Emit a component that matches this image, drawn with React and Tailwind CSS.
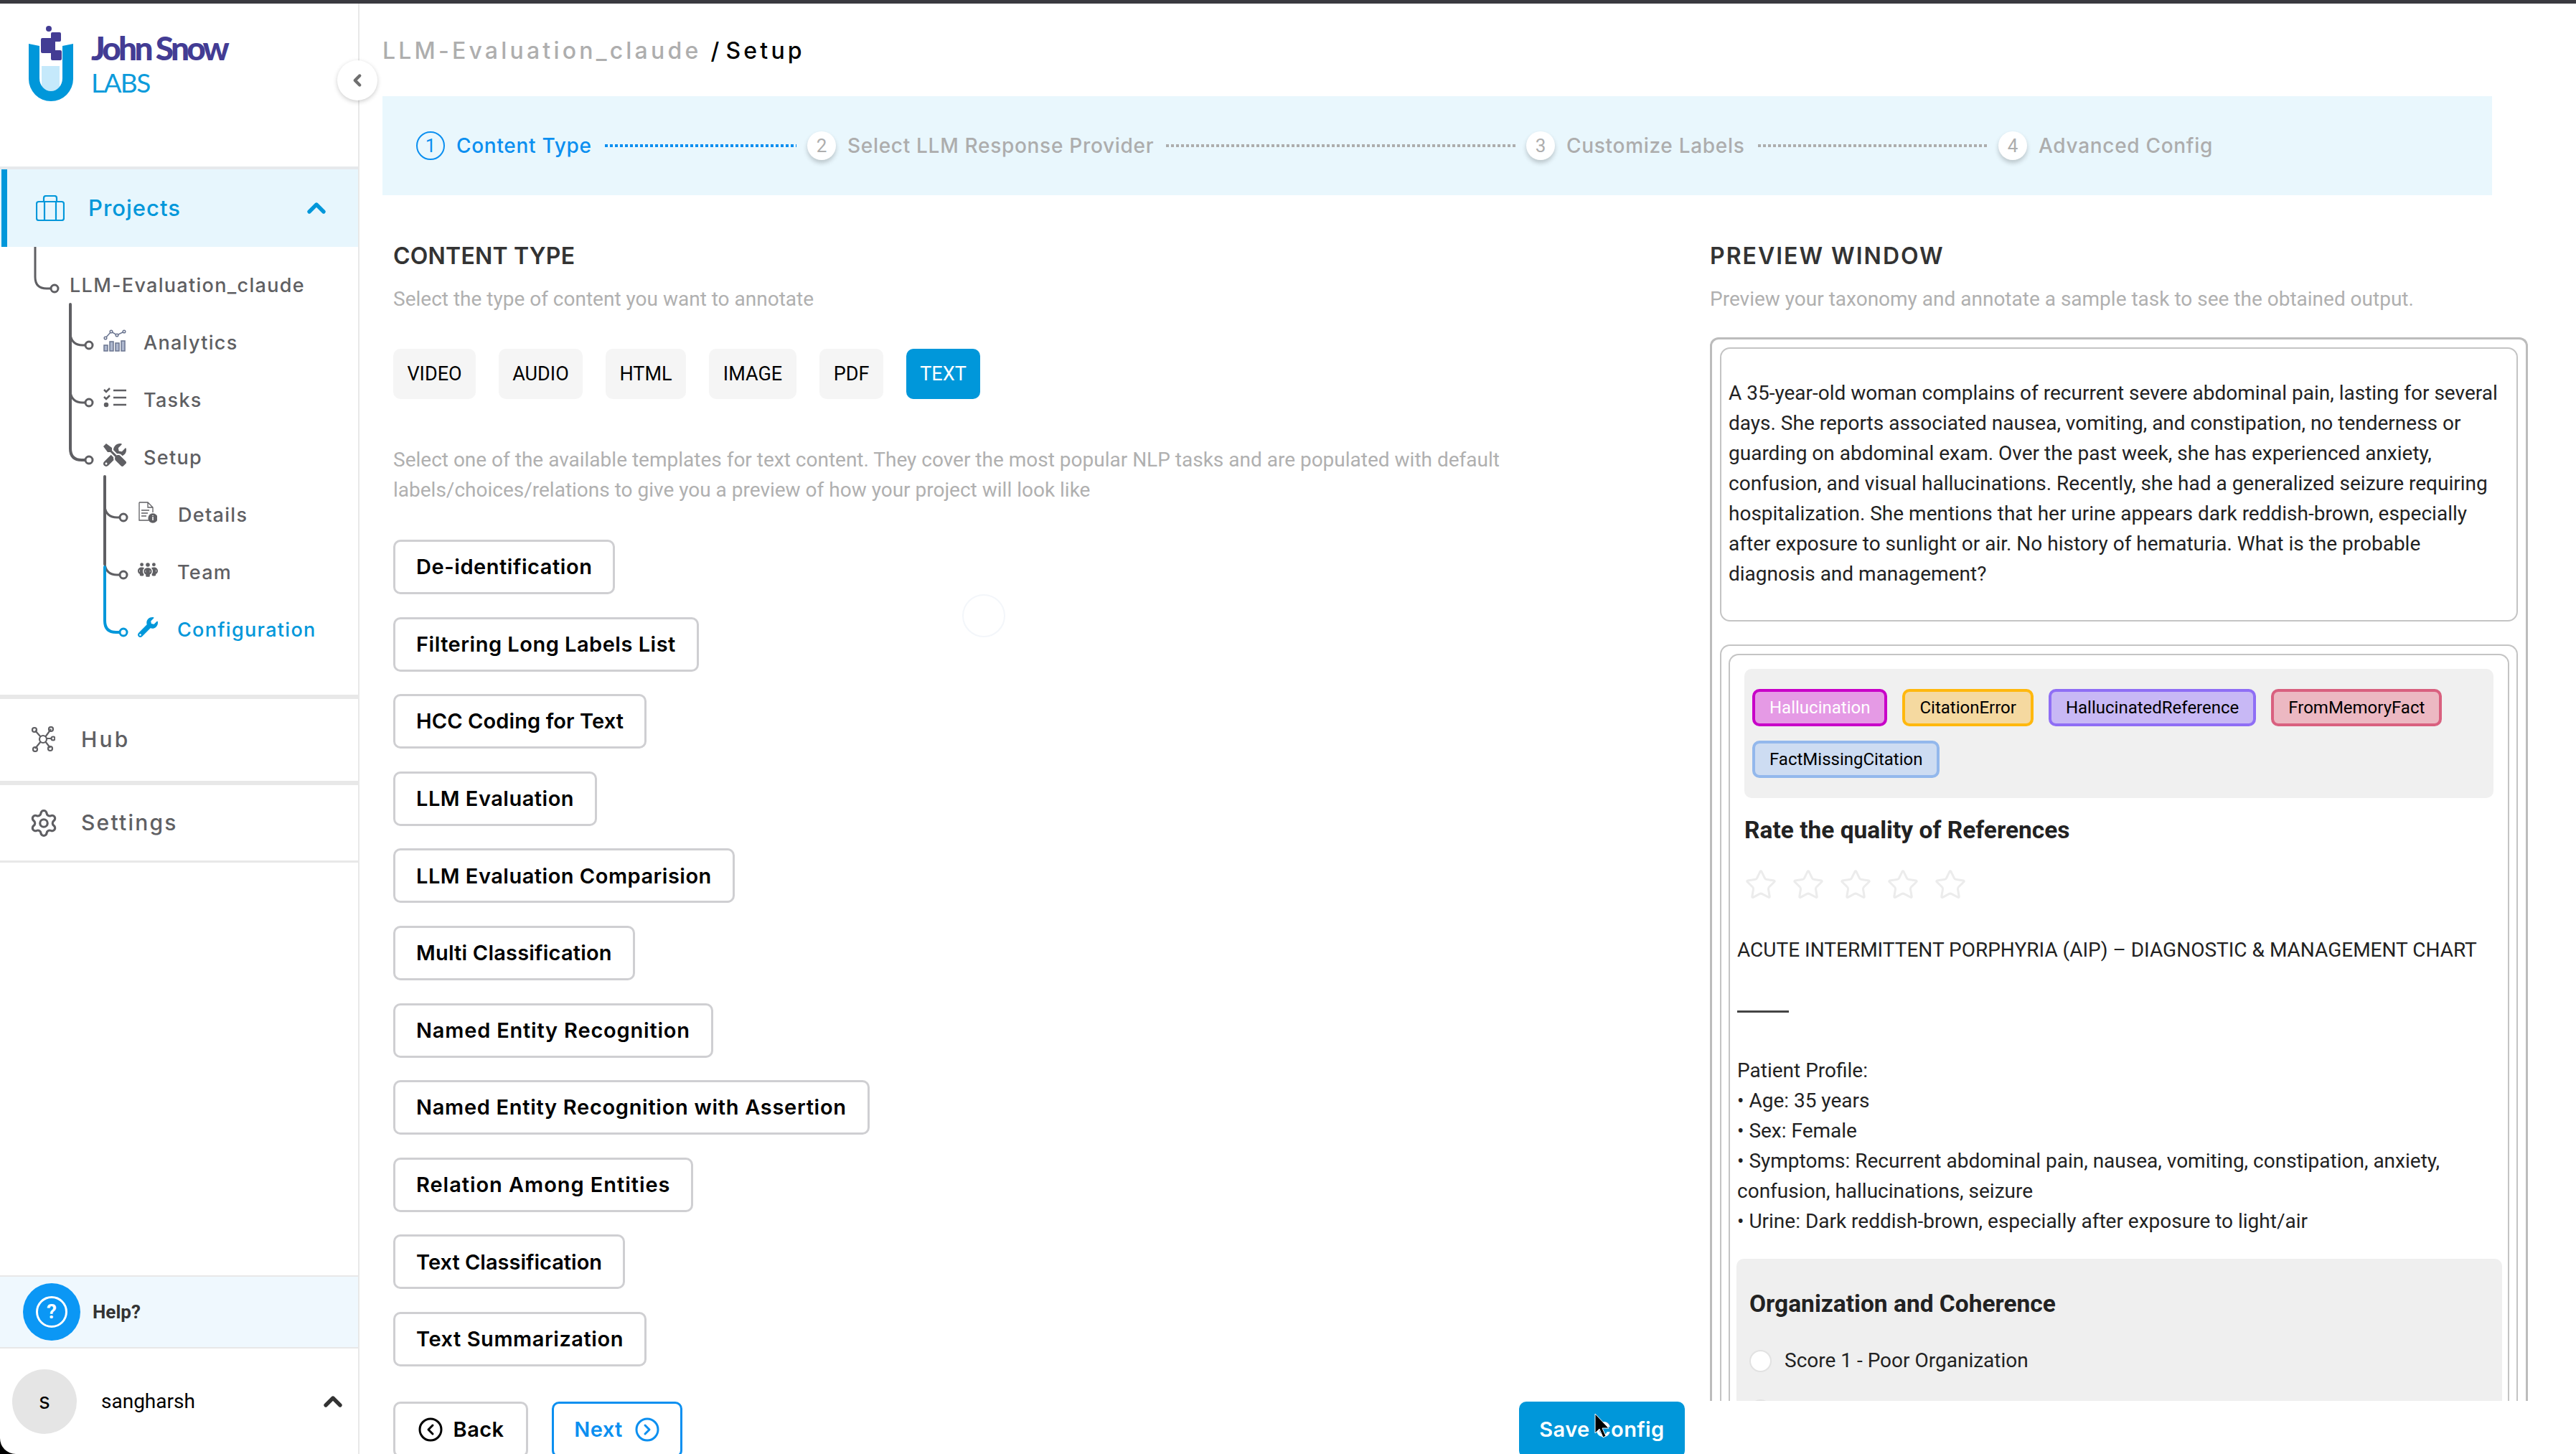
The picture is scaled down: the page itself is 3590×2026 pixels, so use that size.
import { ChevronLeft, ChevronUp, CircleChevronLeft, CircleChevronRight, Settings, Star } from 'lucide-react';
import { FaTools, FaWrench } from 'react-icons/fa';
import { FaPeopleGroup } from 'react-icons/fa6';

const tabs = [
  { label: 'VIDEO', width: 'w-[115px]' },
  { label: 'AUDIO', width: 'w-[117px]' },
  { label: 'HTML', width: 'w-[112px]' },
  { label: 'IMAGE', width: 'w-[122px]' },
  { label: 'PDF', width: 'w-[89px]' },
];

const templates = [
  { name: 'De-identification', track: 'tracking-[0.55px]' },
  { name: 'Filtering Long Labels List', track: 'tracking-[0.5px]' },
  { name: 'HCC Coding for Text', track: 'tracking-[0.1px]' },
  { name: 'LLM Evaluation', track: 'tracking-[0.5px]' },
  { name: 'LLM Evaluation Comparision', track: 'tracking-[0.5px]' },
  { name: 'Multi Classification', track: 'tracking-[0.2px]' },
  { name: 'Named Entity Recognition', track: 'tracking-[0.8px]' },
  { name: 'Named Entity Recognition with Assertion', track: 'tracking-[0.7px]' },
  { name: 'Relation Among Entities', track: 'tracking-[0.95px]' },
  { name: 'Text Classification', track: 'tracking-[0px]' },
  { name: 'Text Summarization', track: 'tracking-[0.55px]' },
];

const question = [
  'A 35-year-old woman complains of recurrent severe abdominal pain, lasting for several',
  'days. She reports associated nausea, vomiting, and constipation, no tenderness or',
  'guarding on abdominal exam. Over the past week, she has experienced anxiety,',
  'confusion, and visual hallucinations. Recently, she had a generalized seizure requiring',
  'hospitalization. She mentions that her urine appears dark reddish-brown, especially',
  'after exposure to sunlight or air. No history of hematuria. What is the probable',
  'diagnosis and management?',
];

const profile = [
  'Patient Profile:',
  '• Age: 35 years',
  '• Sex: Female',
  '• Symptoms: Recurrent abdominal pain, nausea, vomiting, constipation, anxiety,',
  'confusion, hallucinations, seizure',
  '• Urine: Dark reddish-brown, especially after exposure to light/air',
];

const chips = [
  { label: 'Hallucination', style: 'border-[#c800c8] bg-[#e59ae5] text-white' },
  { label: 'CitationError', style: 'border-[#ffb80e] bg-[#f5d9a0] text-black' },
  { label: 'HallucinatedReference', style: 'border-[#8f6ef5] bg-[#c8b8f5] text-black' },
  { label: 'FromMemoryFact', style: 'border-[#d9607f] bg-[#ecb8c2] text-black' },
  { label: 'FactMissingCitation', style: 'border-[#93b8ec] bg-[#cddcf2] text-black' },
];

function Logo() {
  return (
    <svg width="62" height="105" viewBox="0 0 62 105">
      <rect x="18" y="56" width="25" height="36" fill="#c5e9fb" />
      <path d="M0 25 L15 28 V73 A16 18 0 0 0 47 73 V28 L62 25 V74 A31 31 0 0 1 0 74 Z" fill="#0097da" />
      <circle cx="28" cy="4" r="4" fill="#433c94" />
      <rect x="31" y="9" width="14" height="13" rx="2" fill="#433c94" />
      <rect x="17" y="17" width="20" height="21" rx="2" fill="#433c94" />
      <rect x="31" y="34" width="15" height="14" rx="2" fill="#433c94" />
    </svg>
  );
}

function TreeLines() {
  return (
    <svg className="absolute top-0 left-0" width="200" height="570" viewBox="0 344 200 570" fill="none" strokeLinecap="round">
      <g stroke="#5f5f63" strokeWidth="3">
        <path d="M49 344 V386 Q49 402 65 402 H71" />
        <circle cx="76" cy="402" r="5" fill="#fff" />
        <path d="M98 424 V625 Q98 641 114 641 H119" strokeWidth="4" />
        <path d="M98 466 Q100 481 115 481 H119" />
        <path d="M98 546 Q100 561 115 561 H119" />
        <circle cx="124" cy="481" r="5" fill="#fff" />
        <circle cx="124" cy="561" r="5" fill="#fff" />
        <circle cx="124" cy="641" r="5" fill="#fff" />
        <path d="M146 664 V786" strokeWidth="4" />
        <path d="M146 706 Q148 721 163 721 H167" />
        <path d="M146 786 Q148 801 163 801 H167" />
        <circle cx="172" cy="721" r="5" fill="#fff" />
        <circle cx="172" cy="801" r="5" fill="#fff" />
      </g>
      <g stroke="#0097da" strokeWidth="3">
        <path d="M146 790 V865 Q146 881 162 881 H167" strokeWidth="4" />
        <circle cx="172" cy="881" r="5" fill="#fff" />
      </g>
    </svg>
  );
}

function AnalyticsIcon() {
  return (
    <svg width="32" height="32" viewBox="0 0 32 32" fill="none" stroke="#6b7590" strokeWidth="1.5">
      <path d="M3 13 L11 4 L19 9 L29 4" />
      <circle cx="3" cy="13" r="1.8" fill="#fff" />
      <circle cx="11" cy="4" r="1.8" fill="#fff" />
      <circle cx="19" cy="9" r="1.8" fill="#fff" />
      <circle cx="29" cy="4" r="1.8" fill="#fff" />
      <rect x="1" y="23" width="5" height="8" fill="#aeb8cf" />
      <rect x="9" y="18" width="5" height="13" fill="#aeb8cf" />
      <rect x="17" y="20" width="5" height="11" fill="#aeb8cf" />
      <rect x="25" y="17" width="5" height="14" fill="#aeb8cf" />
    </svg>
  );
}

function TasksIcon() {
  return (
    <svg width="32" height="28" viewBox="0 0 32 28" fill="none" stroke="#5f5f63" strokeWidth="2.5">
      <path d="M1 3 L4 6 L9 1" />
      <path d="M1 13 L4 16 L9 11" />
      <circle cx="4" cy="24" r="2" fill="#5f5f63" />
      <path d="M14 4 H32 M14 14 H32 M14 24 H32" />
    </svg>
  );
}

function DetailsIcon() {
  return (
    <svg width="26" height="30" viewBox="0 0 26 30" fill="none" stroke="#5f5f63" strokeWidth="1.3">
      <path d="M1 1 H13 L20 8 V15 M13 1 V8 H20 M1 1 V26 H14" />
      <path d="M4 12 H15 M4 16 H13 M4 20 H11" />
      <circle cx="20" cy="23" r="6" fill="#5f5f63" />
      <path d="M20 21 V26 M20 19 V20" stroke="#fff" strokeWidth="1.5" />
    </svg>
  );
}

function BriefcaseIcon() {
  return (
    <svg width="40" height="36" viewBox="0 0 40 36" fill="none" stroke="#0097da" strokeWidth="2.2">
      <rect x="1" y="9" width="38" height="26" rx="3" />
      <path d="M11 9 V4 Q11 1 14 1 H26 Q29 1 29 4 V9 M12 9 V35 M28 9 V35" />
    </svg>
  );
}

function HubIcon() {
  return (
    <svg width="34" height="36" viewBox="0 0 34 36" fill="none" stroke="#5f5f63" strokeWidth="2.2">
      <path d="M6 6 L14 15 M28 4 L20 15 M6 31 L14 21 M27 30 L20 21 M22 17 L28 17" />
      <circle cx="17" cy="18" r="5" />
      <circle cx="5" cy="5" r="3" />
      <circle cx="28" cy="4" r="3" />
      <circle cx="31" cy="17" r="2.5" />
      <circle cx="6" cy="32" r="3" />
      <circle cx="27" cy="31" r="3" />
    </svg>
  );
}

function Cursor() {
  return (
    <svg className="absolute left-[104px] top-[16px]" width="24" height="36" viewBox="0 0 24 36">
      <path d="M2 1 V28 L8 22 L13 34 L17 32 L12 21 L21 21 Z" fill="#000" stroke="#fff" strokeWidth="1" />
    </svg>
  );
}

function TreeRow({ icon, label, iconBox, active }) {
  return (
    <div className={`flex h-[80px] items-center font-['Inter',sans-serif] text-[27px] font-medium tracking-[1.3px] ${active ? 'text-[#0097da]' : 'text-[#5f5f63]'}`}>
      <div className={`flex items-center justify-center pb-[8px] ${iconBox}`}>{icon}</div>
      <span>{label}</span>
    </div>
  );
}

function Step({ n, label, width, active }) {
  return (
    <div className="flex items-center">
      <div className={`flex h-[40px] w-[40px] shrink-0 items-center justify-center rounded-full text-[26px] ${active ? 'border-2 border-[#0b8ff0] text-[#0b8ff0]' : 'bg-white text-[#adadad] shadow-[0_4px_6px_rgba(0,0,0,0.2)]'}`}>
        {n}
      </div>
      <span className={`ml-[16px] whitespace-nowrap font-['Inter',sans-serif] text-[28px] font-medium tracking-[0.7px] ${width} ${active ? 'text-[#0b8ff0]' : 'text-[#adadad]'}`}>
        {label}
      </span>
    </div>
  );
}

function Dots({ width, active }) {
  return (
    <div className={`mr-[15px] ml-[17px] h-[4px] ${width} ${active
      ? 'bg-[repeating-linear-gradient(90deg,#0b8ff0_0,#0b8ff0_4px,transparent_4px,transparent_7px)]'
      : 'bg-[repeating-linear-gradient(90deg,#adadad_0,#adadad_4px,transparent_4px,transparent_7px)]'}`} />
  );
}

function Sidebar() {
  return (
    <aside className="relative flex w-[501px] shrink-0 flex-col border-r-2 border-[#e8e8e8] bg-white">
      {/* Logo */}
      <div className="flex h-[227px] items-start gap-[25px] pl-[40px] pt-[31px]">
        <Logo />
        <div className="pt-[6px] font-['Lato',sans-serif]">
          <div className="text-[46px] leading-[50px] font-black tracking-[-3.8px] whitespace-nowrap text-[#433c94]">John Snow</div>
          <div className="mt-[3px] text-[37px] leading-[40px] tracking-[-1.6px] text-[#0c9bdb]">LABS</div>
        </div>
      </div>

      <div className="absolute top-[79px] left-[470px] z-20 flex h-[56px] w-[56px] items-center justify-center rounded-full bg-white shadow-[0_2px_6px_rgba(0,0,0,0.2)]">
        <ChevronLeft size={26} strokeWidth={4} className="text-[#6f6f6f]" />
      </div>

      {/* Projects */}
      <div className="flex h-[112px] items-center border-t-4 border-[#e6e9ec] bg-[#e7f6fd] pr-[38px] pl-[2px]">
        <div className="h-full w-[8px] bg-[#0097da]" />
        <div className="ml-[40px]"><BriefcaseIcon /></div>
        <span className="ml-[33px] flex-1 font-['Inter',sans-serif] text-[31px] font-medium tracking-[1px] text-[#0097da]">Projects</span>
        <ChevronUp size={40} strokeWidth={3.2} className="text-[#0097da]" />
      </div>

      {/* Tree */}
      <div className="relative pt-[14px] pb-[50px]">
        <TreeLines />
        <TreeRow label="LLM-Evaluation_claude" iconBox="w-[97px]" />
        <TreeRow label="Analytics" icon={<AnalyticsIcon />} iconBox="w-[200px] pl-[120px]" />
        <TreeRow label="Tasks" icon={<TasksIcon />} iconBox="w-[200px] pl-[120px]" />
        <TreeRow label="Setup" icon={<FaTools size={32} className="text-[#5f5f63]" />} iconBox="w-[200px] pl-[120px]" />
        <TreeRow label="Details" icon={<DetailsIcon />} iconBox="w-[248px] pl-[164px]" />
        <TreeRow label="Team" icon={<FaPeopleGroup size={28} className="text-[#5f5f63]" />} iconBox="w-[247px] pl-[164px]" />
        <TreeRow label="Configuration" active icon={<FaWrench size={28} className="text-[#0097da]" />} iconBox="w-[247px] pl-[164px]" />
      </div>

      <div className="flex h-[120px] items-center border-t-[6px] border-[#e8e8e8] pb-[2px] pl-[43px]">
        <HubIcon />
        <span className="ml-[36px] font-['Inter',sans-serif] text-[30px] font-medium tracking-[3.2px] text-[#5f5f63]">Hub</span>
      </div>
      <div className="flex h-[114px] items-center border-t-[6px] border-b-[3px] border-[#e8e8e8] pl-[40px]">
        <Settings size={42} strokeWidth={1.8} className="text-[#5f5f63]" />
        <span className="ml-[31px] font-['Inter',sans-serif] text-[30px] font-medium tracking-[2.2px] text-[#5f5f63]">Settings</span>
      </div>

      {/* Help + user */}
      <div className="mt-auto flex h-[102px] items-center border-y-2 border-[#e8e8e8] bg-[#eff8fe] pl-[32px]">
        <div className="flex h-[80px] w-[80px] items-center justify-center rounded-full bg-[#0b97f5]">
          <div className="flex h-[44px] w-[44px] items-center justify-center rounded-full border-[3px] border-white text-[28px] leading-none font-bold text-white">?</div>
        </div>
        <span className="ml-[17px] text-[26px] font-bold text-[#333]">Help?</span>
      </div>
      <div className="flex h-[147px] items-center pr-[15px] pl-[17px]">
        <div className="flex h-[90px] w-[90px] items-center justify-center rounded-full bg-[#e5e5e5] font-['Inter',sans-serif] text-[30px] text-black">s</div>
        <span className="ml-[34px] flex-1 text-[28px] text-black">sangharsh</span>
        <ChevronUp size={40} strokeWidth={3.2} className="text-[#333]" />
      </div>
      <div className="absolute bottom-0 left-0 h-[22px] w-[22px] bg-black">
        <div className="h-full w-full rounded-bl-[22px] bg-white" />
      </div>
    </aside>
  );
}

function Preview() {
  return (
    <div className="h-[1482px] overflow-hidden rounded-t-[12px] border-x-[3px] border-t-[3px] border-[#bcbcbc] p-[11px] text-[28px] leading-[42px] whitespace-nowrap text-[#222]">
      <div className="h-[382px] rounded-[14px] border-2 border-[#c4c4c4] pt-[41px] pl-[10px]">
        {question.map((line) => <div key={line}>{line}</div>)}
      </div>
      <div className="mt-[32px] rounded-t-[14px] border-x-2 border-t-2 border-[#c4c4c4] px-[10px] pt-[11px]">
        <div className="rounded-t-[14px] border-x-2 border-t-2 border-[#c4c4c4] pt-[19px] pb-[40px]">
          <div className="mx-[20px] flex flex-wrap gap-x-[21px] gap-y-[20px] rounded-[10px] bg-[#f0f0f0] px-[11px] py-[28px]">
            {chips.map((chip) => (
              <span key={chip.label} className={`flex h-[52px] items-center rounded-[10px] border-4 px-[20px] text-[24px] leading-none ${chip.style}`}>
                {chip.label}
              </span>
            ))}
          </div>
          <div className="mt-[23px] ml-[20px] text-[33.5px] leading-[44px] font-bold">Rate the quality of References</div>
          <div className="mt-[31px] ml-[20px] flex gap-[20px]">
            {[1, 2, 3, 4, 5].map((n) => <Star key={n} size={46} strokeWidth={1.6} className="text-[#ececec]" />)}
          </div>
          <div className="mt-[47px] ml-[10px]">ACUTE INTERMITTENT PORPHYRIA (AIP) – DIAGNOSTIC &amp; MANAGEMENT CHART</div>
          <div className="mt-[63px] ml-[10px] h-[3px] w-[72px] bg-[#444]" />
          <div className="mt-[60px] ml-[10px]">
            {profile.map((line) => <div key={line}>{line}</div>)}
          </div>
          <div className="mt-[31px] ml-[9px] w-[1067px] rounded-[10px] bg-[#efefef] pt-[41px] pb-[60px] pl-[18px]">
            <div className="text-[33.5px] leading-[44px] font-bold">Organization and Coherence</div>
            <div className="mt-[37px] flex h-[40px] items-center gap-[18px]">
              <span className="h-[31px] w-[31px] rounded-full border-2 border-[#e2e2e2] bg-white" />
              Score 1 - Poor Organization
            </div>
            <div className="mt-[29px] flex h-[40px] items-center">
              <span className="h-[31px] w-[31px] rounded-full border-2 border-[#e2e2e2] bg-white" />
            </div>
          </div>
        </div>
      </div>
    </div>
  );
}

export default function App() {
  return (
    <div className="relative flex h-screen flex-col overflow-hidden bg-white font-['Roboto',sans-serif]">
      <div className="h-[5px] shrink-0 bg-[#3a3a40]" />
      <div className="flex min-h-0 flex-1">
        <Sidebar />

        <main className="relative min-w-0 flex-1 pl-[32px]">
          <div className="mt-[46px] flex h-[40px] items-center font-['Inter',sans-serif] text-[32px] font-medium tracking-[4.2px] whitespace-nowrap">
            <span className="text-[#aeaeae]">LLM-Evaluation_claude</span>
            <span className="ml-[13px] text-black">/</span>
            <span className="ml-[5px] text-black">Setup</span>
          </div>

          {/* Stepper */}
          <div className="mt-[43px] flex h-[138px] w-[2940px] items-center bg-[#e9f7fd] pl-[47px]">
            <Step n="1" label="Content Type" width="w-[190px]" active />
            <Dots width="w-[267px]" active />
            <Step n="2" label="Select LLM Response Provider" width="w-[427px]" />
            <Dots width="w-[487px]" />
            <Step n="3" label="Customize Labels" width="w-[250px]" />
            <Dots width="w-[320px]" />
            <Step n="4" label="Advanced Config" width="w-[243px]" />
          </div>

          <div className="mt-[64px] flex gap-[35px] pl-[15px]">
            {/* Left column */}
            <section className="w-[1800px] shrink-0">
              <h2 className="font-['Inter',sans-serif] text-[32px] leading-[42px] font-semibold tracking-[0.2px] text-[#333]">CONTENT TYPE</h2>
              <p className="mt-[19px] text-[28px] leading-[40px] text-[#b0b0b0]">Select the type of content you want to annotate</p>

              <div className="mt-[49px] flex gap-[32px]">
                {tabs.map((tab) => (
                  <div key={tab.label} className={`flex h-[70px] items-center justify-center rounded-[10px] bg-[#f5f5f5] text-[27px] text-black ${tab.width}`}>
                    {tab.label}
                  </div>
                ))}
                <div className="flex h-[70px] w-[103px] items-center justify-center rounded-[10px] bg-[#0097da] text-[27px] text-white">TEXT</div>
              </div>

              <p className="mt-[64px] text-[28px] leading-[42px] text-[#b0b0b0]">
                Select one of the available templates for text content. They cover the most popular NLP tasks and are populated with default<br />
                labels/choices/relations to give you a preview of how your project will look like
              </p>

              <div className="mt-[48px] flex flex-col items-start gap-[31.6px]">
                {templates.map((t) => (
                  <div key={t.name} className={`flex h-[76px] items-center rounded-[10px] border-[3px] border-[#cfcfd2] px-[29px] font-['Inter',sans-serif] text-[29px] font-semibold whitespace-nowrap text-black ${t.track}`}>
                    {t.name}
                  </div>
                ))}
              </div>

              <div className="mt-[49px] flex font-['Inter',sans-serif] text-[29px] font-semibold tracking-[0.4px]">
                <div className="flex h-[78px] w-[188px] items-center justify-center gap-[14px] rounded-[10px] border-[3px] border-[#cfcfd2] text-black">
                  <CircleChevronLeft size={36} strokeWidth={2} /> Back
                </div>
                <div className="ml-[33px] flex h-[78px] w-[182px] items-center justify-center gap-[16px] rounded-[10px] border-[3px] border-[#0b8ff0] text-[#0b8ff0]">
                  Next <CircleChevronRight size={36} strokeWidth={2} />
                </div>
                <div className="relative ml-auto flex h-[78px] w-[231px] items-center justify-center rounded-[10px] bg-[#0097da] text-white">
                  Save Config
                  <Cursor />
                </div>
              </div>
            </section>

            {/* Right column */}
            <section className="w-[1140px] shrink-0">
              <h2 className="font-['Inter',sans-serif] text-[32px] leading-[42px] font-semibold tracking-[2px] text-[#333]">PREVIEW WINDOW</h2>
              <p className="mt-[19px] text-[28px] leading-[40px] text-[#b0b0b0]">Preview your taxonomy and annotate a sample task to see the obtained output.</p>
              <div className="mt-[33px]"><Preview /></div>
            </section>
          </div>

          {/* Loading spinner, barely visible behind the list */}
          <div className="absolute top-[823px] left-[840px] h-[60px] w-[60px] rounded-full border-2 border-[#f3f6fa]" />
        </main>
      </div>
    </div>
  );
}
